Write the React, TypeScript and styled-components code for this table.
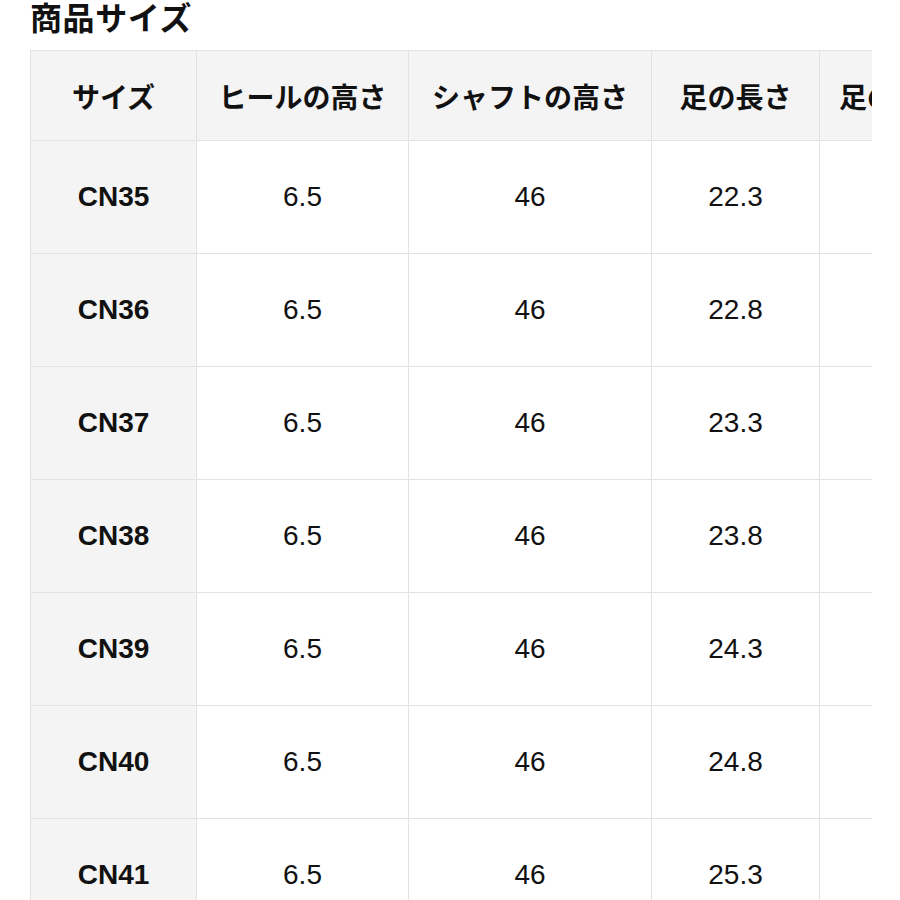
import React from "react";
import styled, { createGlobalStyle } from "styled-components";

const Global = createGlobalStyle`
  html, body { margin: 0; padding: 0; background: #fff; }
  body { font-family: "Liberation Sans", "Noto Sans CJK JP", sans-serif; color: #111; }
`;

const Page = styled.div`
  width: 900px;
  height: 900px;
  overflow: hidden;
  padding-left: 30px;
  box-sizing: border-box;
`;

const Title = styled.h2`
  margin: 0;
  height: 50px;
  font-family: "Noto Sans CJK JP", sans-serif;
  font-weight: 700;
  font-size: 32px;
  line-height: 38px;
  letter-spacing: 0.6px;
  color: #111;
  transform: translateY(-3px);
`;

const Scroller = styled.div`
  width: 842px;
  overflow: hidden;
`;

const Table = styled.table`
  border-collapse: collapse;
  table-layout: fixed;
  width: 912px;
`;

const HeadCell = styled.th`
  height: 89px;
  padding: 0;
  background: #f4f4f4;
  border: 1.5px solid #e2e2e2;
  font-family: "Noto Sans CJK JP", sans-serif;
  font-weight: 700;
  font-size: 28px;
  color: #111;
  text-align: center;
  vertical-align: middle;
  white-space: nowrap;
  overflow: hidden;
`;

const SizeCell = styled.th`
  height: 112px;
  padding: 0;
  background: #f4f4f4;
  border: 1.5px solid #e2e2e2;
  font-family: "Liberation Sans", sans-serif;
  font-weight: 700;
  font-size: 28px;
  color: #111;
  text-align: center;
  vertical-align: middle;
`;

const ValueCell = styled.td`
  height: 112px;
  padding: 0;
  background: #fff;
  border: 1.5px solid #e2e2e2;
  font-family: "Liberation Sans", sans-serif;
  font-weight: 400;
  font-size: 28px;
  color: #111;
  text-align: center;
  vertical-align: middle;
`;

const widths = [166, 212, 243, 168, 123];
const headers = ["サイズ", "ヒールの高さ", "シャフトの高さ", "足の長さ", "足の幅"];
const rows = [
  ["CN35", "6.5", "46", "22.3", ""],
  ["CN36", "6.5", "46", "22.8", ""],
  ["CN37", "6.5", "46", "23.3", ""],
  ["CN38", "6.5", "46", "23.8", ""],
  ["CN39", "6.5", "46", "24.3", ""],
  ["CN40", "6.5", "46", "24.8", ""],
  ["CN41", "6.5", "46", "25.3", ""],
];

export default function App() {
  return (
    <Page>
      <Global />
      <Title>商品サイズ</Title>
      <Scroller>
        <Table>
          <colgroup>
            {widths.map((w, i) => (
              <col key={i} style={{ width: w }} />
            ))}
          </colgroup>
          <thead>
            <tr>
              {headers.map((h) => (
                <HeadCell key={h}>{h}</HeadCell>
              ))}
            </tr>
          </thead>
          <tbody>
            {rows.map((r) => (
              <tr key={r[0]}>
                <SizeCell scope="row">{r[0]}</SizeCell>
                {r.slice(1).map((v, i) => (
                  <ValueCell key={i}>{v}</ValueCell>
                ))}
              </tr>
            ))}
          </tbody>
        </Table>
      </Scroller>
    </Page>
  );
}
